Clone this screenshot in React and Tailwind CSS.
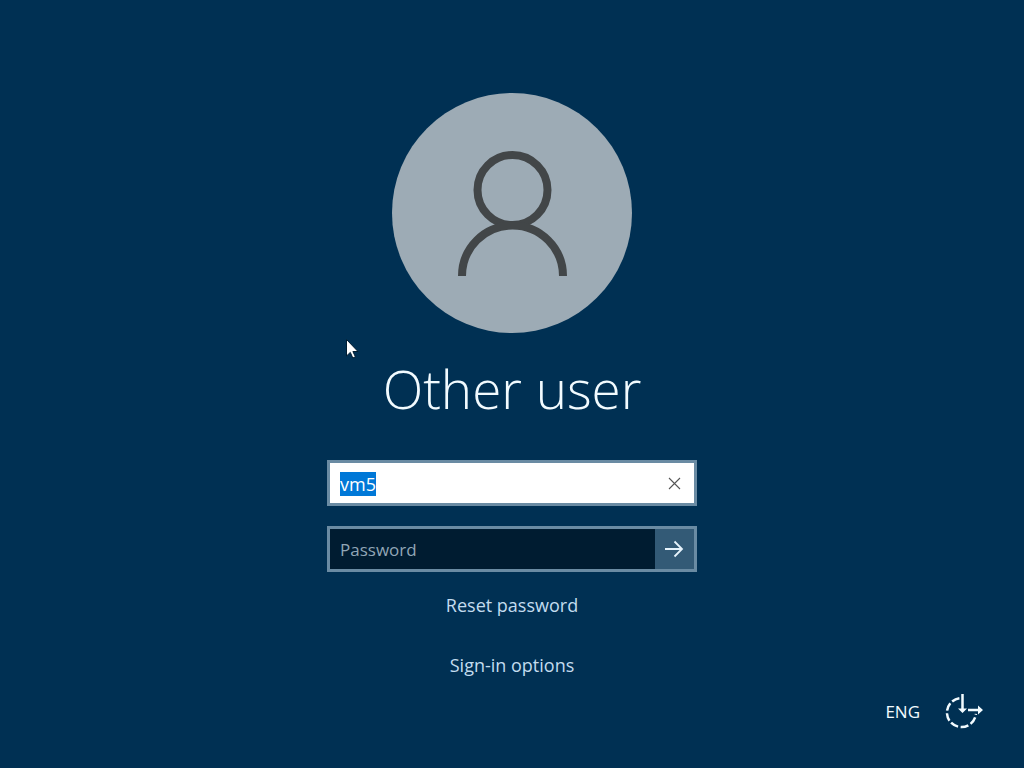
import React, { useEffect, useRef, useState } from 'react';

function App() {
  const [username, setUsername] = useState('vm5');
  const [password, setPassword] = useState('');
  const usernameRef = useRef(null);

  useEffect(() => {
    usernameRef.current.focus();
    usernameRef.current.select();
  }, []);

  const clearUsername = () => {
    setUsername('');
    usernameRef.current.focus();
  };

  return (
    <div className="relative flex min-h-screen flex-col bg-[#003053] font-['Open_Sans','Noto_Sans',sans-serif] text-[#c3dcef]">
      <main className="flex flex-1 flex-col items-center px-4 pt-[93px]">
        <Avatar />
        <h1 className="mt-4 text-[53px] leading-[80px] font-light text-[#f2fbff]">Other user</h1>

        <form className="mt-[31px] flex w-full max-w-[370px] flex-col gap-5" onSubmit={(e) => e.preventDefault()}>
          <div className="flex h-[46px] items-center border-3 border-[#6a8ba3] bg-white">
            <input
              ref={usernameRef}
              type="text"
              aria-label="User name"
              value={username}
              onChange={(e) => setUsername(e.target.value)}
              className="h-full min-w-0 flex-1 px-[10px] pt-px text-lg leading-[25px] text-black outline-none selection:bg-[#0078d7] selection:text-white"
            />
            <button type="button" aria-label="Clear" onClick={clearUsername} className="flex h-full w-[39px] items-center justify-center">
              <svg width="14" height="14" viewBox="0 0 14 14" fill="none" stroke="#555" strokeWidth="1.1">
                <path d="M1 2l11 11M12 2l-11 11" />
              </svg>
            </button>
          </div>

          <div className="flex h-[46px] items-center border-3 border-[#6a8ba3] bg-[#001c31]">
            <input
              type="password"
              aria-label="Password"
              placeholder="Password"
              value={password}
              onChange={(e) => setPassword(e.target.value)}
              className="h-full min-w-0 flex-1 px-[10px] pt-px text-[17px] leading-[25px] text-white outline-none placeholder:text-[#91a6b6]"
            />
            <button type="submit" aria-label="Submit" className="flex h-full w-[39px] items-center justify-center bg-[#335a76]">
              <svg width="20" height="18" viewBox="0 0 20 18" fill="none" stroke="#e6f3fc" strokeWidth="1.8">
                <path d="M0 9h17M9.5 1.5L17 9l-7.5 7.5" />
              </svg>
            </button>
          </div>
        </form>

        <a href="#reset" className="mt-[19px] text-lg leading-7">Reset password</a>
        <a href="#options" className="mt-8 text-lg leading-7">Sign-in options</a>
      </main>

      <footer className="flex items-center justify-end gap-6 pr-10 pb-[38px]">
        <button type="button" className="text-[17px] leading-7 text-[#f2fbff]">ENG</button>
        <button type="button" aria-label="Ease of access">
          <EaseOfAccessIcon />
        </button>
      </footer>

      <Cursor />
    </div>
  );
}

function Avatar() {
  return (
    <svg width="240" height="240" viewBox="0 0 240 240" fill="none">
      <circle cx="120" cy="120" r="120" fill="#9dabb5" />
      <g stroke="#424648" strokeWidth="8">
        <circle cx="120.5" cy="97" r="35" />
        <path d="M70 183a50.5 50.5 0 0 1 101 0" />
      </g>
    </svg>
  );
}

function EaseOfAccessIcon() {
  return (
    <svg width="40" height="36" viewBox="0 0 40 36" fill="none" stroke="#f2fbff" strokeWidth="2.5">
      <path d="M15.4 4.2A14.5 14.5 0 1 0 31.900 19.800" strokeDasharray="8 2.600" />
      <path d="M18.5 0v16M24 16h11" />
      <path d="M14 14.5h9l-4.500 4.500zM34 11.500v9l5-4.500z" fill="#f2fbff" stroke="none" />
    </svg>
  );
}

function Cursor() {
  return (
    <svg className="pointer-events-none absolute top-[339px] left-[346px]" width="13" height="20" viewBox="0 0 13 20">
      <path d="M.5.5v16.500l3.800-3.600 2.500 5.600 2.600-1.200-2.500-5.300h5.100z" fill="#fff" stroke="#001c31" strokeWidth="1" />
    </svg>
  );
}

export default App;
